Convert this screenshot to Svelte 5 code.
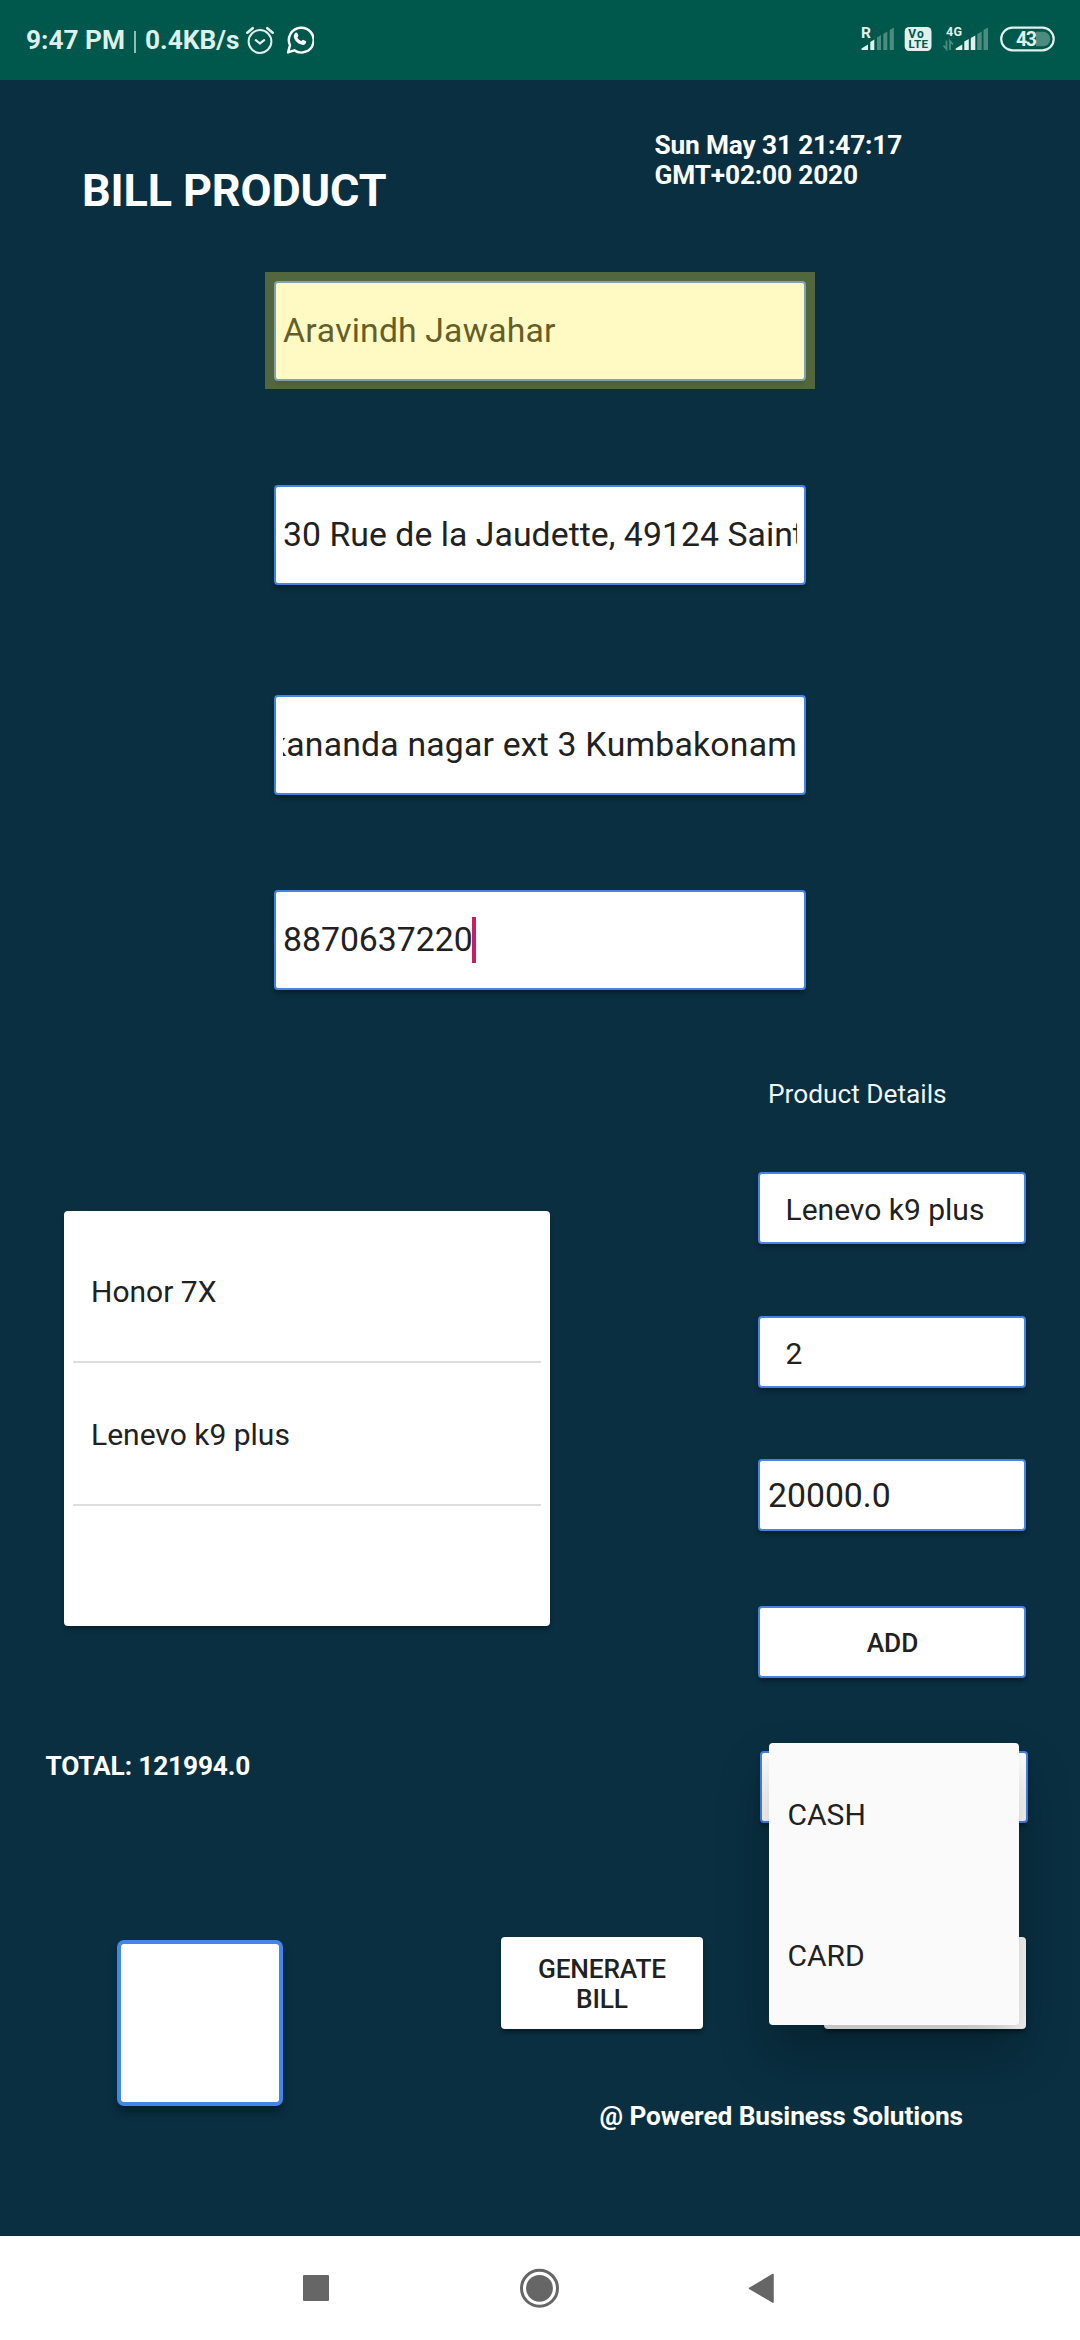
<script>
  const customer = [
    { text: 'Aravindh Jawahar', kind: 'filled' },
    { text: '30 Rue de la Jaudette, 49124 Saint', kind: 'street' },
    { text: 'Vivekananda nagar ext 3 Kumbakonam', kind: 'end' },
    { text: '8870637220', kind: 'focused' },
  ];
  const products = ['Honor 7X', 'Lenevo k9 plus'];
  const payments = ['CASH', 'CARD'];
</script>

<div class="screen">
  <div class="status">
    <span class="time">9:47 PM</span>
    <i class="sep"></i>
    <span class="speed">0.4KB/s</span>
    <svg class="alarm" width="30" height="30" viewBox="0 0 30 30" fill="none" stroke="#dff0ec" stroke-width="2" stroke-linecap="round" stroke-linejoin="round">
      <circle cx="15" cy="16.5" r="11.4" />
      <path d="M10.8 15.2 14.8 18.5 19.200 15.2" stroke-width="2.2" />
      <path d="M2.3 7.700 7.700 3.200M27.700 7.700 22.300 3.200" stroke-width="2.6" />
    </svg>
    <svg class="chat" width="28" height="30" viewBox="0 0 28 30">
      <path d="M2 27.4 4 20.300A12.400 12.400 0 1 1 8.200 25.300Z" fill="none" stroke="#fff" stroke-width="2.4" stroke-linejoin="round" />
      <path d="M9.3 7.900c.7-.6 1.6-.6 2 .2l1 2.200c.3.7-.9 1.700-.9 2.100.8 1.700 2.300 3 4 3.700.5 0 1.300-1.500 2-1.200l2.300 1.200c.9.5.4 2.200-.4 2.900-1.500 1.300-3.500 1-5.400.1-2.600-1.200-4.600-3.300-5.700-5.700-.8-2.100-.5-4.300 1.100-5.500z" fill="#fff" />
    </svg>
    <svg class="radio" width="200" height="30" viewBox="0 0 200 30">
      <g fill="#e1f1ee">
        <text x="1" y="12.5" font-size="15.5" font-weight="700">R</text>
        <path d="M1.500 25v-1.500l6.500-4V25zM10.300 25v-8l4-2.500V25z" />
        <rect x="44.700" y="2" width="26.800" height="24" rx="4.500" />
        <text x="86" y="10.500" font-size="12.500" font-weight="700" textLength="16">4G</text>
        <path d="M95.700 25v-1.500l6.600-4V25zM104.300 25v-8.500l4.500-2.500V25zM110.800 25V13l4.500-2.500V25z" />
      </g>
      <g fill="#4c8b80">
        <path d="M17 25V12.500l4-2.500V25zM23.300 25V9L27.300 6.500V25zM29.700 25V5L33.900 2.500V25zM117.200 25V9l4.500-2.500V25zM123.500 25V5L128 2.500V25z" />
        <path d="M86.500 15.500v8.500l-3-3.500M90 25v-9l3 3.500" fill="none" stroke="#4c8b80" stroke-width="1.8" />
      </g>
      <g fill="#00574b" font-weight="700">
        <text x="48.300" y="12.800" font-size="12" textLength="15.500">Vo</text>
        <text x="48.500" y="23.300" font-size="11.500" textLength="19.500">LTE</text>
      </g>
      <path d="M176 6.200h7a7.300 7.300 0 0 1 0 14.600h-7z" fill="#4c8b80" transform="translate(0 0.5)" />
      <rect x="141.200" y="2.700" width="52.500" height="22.600" rx="11.300" fill="none" stroke="#e1f1ee" stroke-width="2.2" />
      <text x="156" y="21" font-size="19.500" font-weight="700" fill="#e1f1ee" textLength="21">43</text>
    </svg>
  </div>

  <main>
    <header>
      <h1>BILL PRODUCT</h1>
      <p class="date">Sun May 31 21:47:17<br />GMT+02:00 2020</p>
    </header>

    <section class="customer">
      {#each customer as field}
        <div class="box field {field.kind}">
          <div class="clip"><span>{field.text}</span>{#if field.kind === 'focused'}<i class="caret"></i>{/if}</div>
        </div>
      {/each}
    </section>

    <section class="middle">
      <div class="left">
        <div class="list">
          {#each products as product}
            <div class="item">{product}</div>
          {/each}
        </div>
        <p class="total">TOTAL: 121994.0</p>
      </div>
      <div class="right">
        <p class="label">Product Details</p>
        <div class="box small">Lenevo k9 plus</div>
        <div class="box small">2</div>
        <div class="box small price">20000.0</div>
        <div class="box small add">ADD</div>
        <div class="box small pay">
          <div class="menu">
            {#each payments as payment}
              <div class="option">{payment}</div>
            {/each}
          </div>
        </div>
      </div>
    </section>

    <section class="actions">
      <div class="box code"></div>
      <div class="side">
        <div class="buttons">
          <div class="button">GENERATE<br />BILL</div>
          <div class="button"></div>
        </div>
        <p class="credit">@ Powered Business Solutions</p>
      </div>
    </section>
  </main>

  <nav>
    <svg width="1080" height="104" viewBox="0 0 1080 104" fill="#666">
      <rect x="303" y="39" width="26" height="26" rx="1" />
      <circle cx="539.5" cy="52.3" r="13.4" />
      <circle cx="539.5" cy="52.3" r="18" fill="none" stroke="#666" stroke-width="3" />
      <path d="M749.5 52.3 773 38.5V66.2Z" stroke="#666" stroke-width="1.5" stroke-linejoin="round" />
    </svg>
  </nav>
</div>

<style>
  :global(body) { margin: 0; background: #092f41; }
  * { box-sizing: border-box; }
  h1, p { margin: 0; }
  .screen {
    width: 1080px;
    height: 2340px;
    display: flex;
    flex-direction: column;
    overflow: hidden;
    background: #092f41;
    color: #fff;
    font-family: Roboto, sans-serif;
    font-size: 26.25px;
    line-height: 30px;
  }
  .status {
    height: 80px;
    flex: none;
    display: flex;
    align-items: center;
    background: #00574b;
    color: #dff0ec;
    font-weight: 700;
    white-space: nowrap;
  }
  .time { width: 108px; margin-left: 26px; }
  .sep { width: 2px; height: 22px; margin-top: 3px; background: #8fbcb3; }
  .speed { width: 96px; margin-left: 9px; }
  .alarm { margin: 0 11px 0 4px; }
  .chat { flex: none; }
  .radio { margin-left: auto; margin-right: 20px; }
  main { height: 2156px; flex: none; }
  header { height: 201px; display: flex; padding: 50px 0 0 82px; }
  h1 { width: 572.5px; padding-top: 34px; font-size: 45px; line-height: 53px; font-weight: 700; letter-spacing: -0.15px; }
  .date { font-weight: 700; letter-spacing: -0.15px; }
  .box {
    background: #fff;
    border: 2px solid #4583e4;
    border-radius: 4px;
    color: #212121;
    box-shadow: 0 4px 5px -1px rgba(0, 0, 0, 0.35);
  }
  .customer { display: flex; flex-direction: column; align-items: center; }
  .field { position: relative; width: 532px; height: 100px; padding: 0 7px; display: flex; align-items: center; margin-bottom: 104px; }
  .field:nth-child(2) { margin-bottom: 110px; }
  .field:nth-child(3) { margin-bottom: 95px; }
  .field:nth-child(4) { margin-bottom: 0; }
  .clip { width: 514px; display: flex; align-items: center; overflow: hidden; white-space: nowrap; font-size: 33.75px; line-height: 46px; font-kerning: none; letter-spacing: 0.15px; }
  .street .clip { letter-spacing: 0.05px; }
  .end .clip { justify-content: flex-end; letter-spacing: 0.2px; }
  .filled::after { content: ''; position: absolute; inset: -11px -11px -10px; background: rgba(255, 235, 59, 0.3); }
  .focused .clip { letter-spacing: 0; }
  .caret { width: 4px; height: 46px; margin-left: -1px; background: #c91e63; }
  .middle { display: flex; height: 947px; }
  .left { width: 758px; padding: 221px 0 0 45.5px; }
  .list { width: 486px; height: 415px; margin-left: 18.5px; padding: 9px; background: #fff; border-radius: 4px; color: #212121; box-shadow: 0 4px 5px -1px rgba(0, 0, 0, 0.35); }
  .item { height: 143px; padding: 54px 0 0 18px; font-size: 30px; line-height: 35px; border-bottom: 2px solid #dedede; }
  .total { margin-top: 125px; font-weight: 700; letter-spacing: -0.15px; }
  .right { width: 268px; padding-top: 89px; }
  .label { padding-left: 10px; margin-bottom: 63px; color: #f2f4f5; }
  .small { height: 72px; margin-bottom: 72px; padding: 18px 0 0 25.5px; font-size: 30px; line-height: 35px; white-space: nowrap; }
  .small:nth-child(3) { margin-bottom: 71px; }
  .price { padding: 15px 0 0 8px; margin-bottom: 75px; font-size: 33.75px; line-height: 40px; }
  .add { height: 72px; margin-bottom: 73px; padding: 20px 0 0 1px; text-align: center; font-size: 26.25px; line-height: 30px; font-weight: 500; }
  .pay { position: relative; width: 268px; margin: 0 0 0 2px; padding: 0; }
  .menu {
    position: absolute;
    z-index: 2;
    left: 7px;
    top: -10px;
    width: 250px;
    height: 282px;
    border-radius: 4px;
    background: #fafafa;
    box-shadow: 0 28px 50px rgba(0, 0, 0, 0.26);
  }
  .option { height: 141px; padding: 54px 0 0 18.5px; }
  .actions { display: flex; height: 219px; padding-left: 117px; }
  .code { width: 166px; height: 166px; margin-top: 3px; border: 4px solid #4285ec; border-radius: 7px; box-shadow: 0 7px 9px -1px rgba(0, 0, 0, 0.35); }
  .side { margin-left: 218px; width: 525px; }
  .buttons { display: flex; justify-content: space-between; }
  .button { width: 202px; height: 92px; padding-top: 17px; background: #fff; border-radius: 4px; color: #212121; text-align: center; font-weight: 500; letter-spacing: -0.15px; box-shadow: 0 4px 5px -1px rgba(0, 0, 0, 0.45); }
  .credit { margin: 72px 0 0 98.5px; font-weight: 700; letter-spacing: -0.08px; }
  nav { height: 104px; flex: none; background: #fff; }
  nav svg { display: block; }
</style>
